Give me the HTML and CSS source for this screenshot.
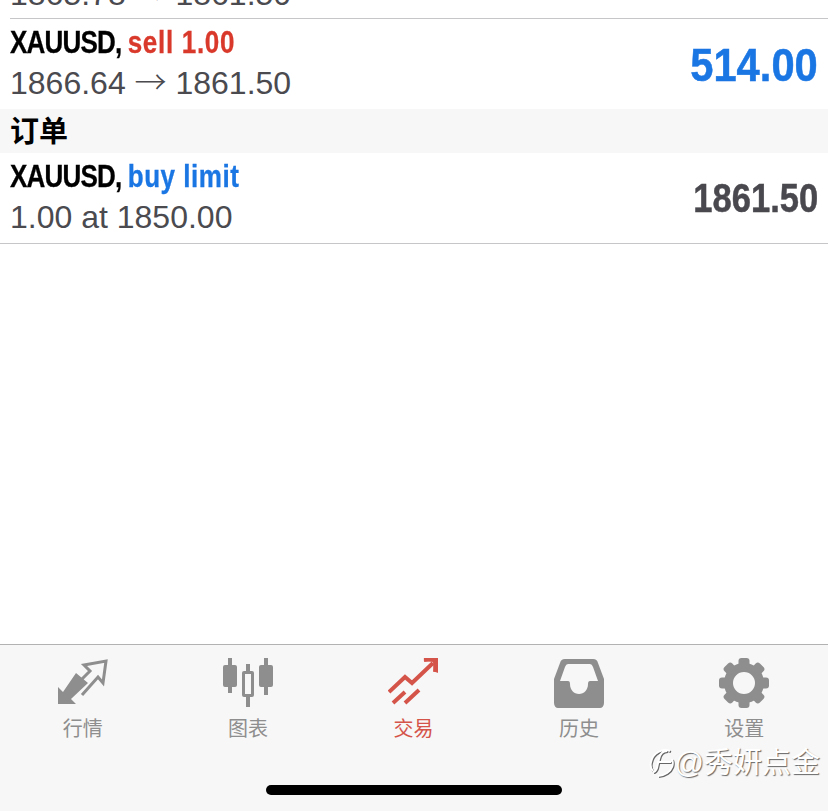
FILE: index.html
```html
<!DOCTYPE html>
<html lang="zh">
  <head>
    <meta charset="utf-8" />
    <meta name="viewport" content="width=device-width,initial-scale=1" />
    <title>交易</title>
    <link rel="stylesheet" href="styles.css">
  </head>
  <body>
    <main class="list">
      <div class="cut-row">
        <div class="cut-text">1865.78 <span class="arrow">→</span> 1861.50</div>
      </div>
      <section class="trade trade-first">
        <div class="trade-info">
          <div class="trade-title"><span class="symbol">XAUUSD, </span><span class="sell">sell 1.00</span></div>
          <div class="trade-sub">1866.64 <span class="arrow">→</span> 1861.50</div>
        </div>
        <div class="profit">514.00</div>
      </section>
      <h2 class="group-head">订单</h2>
      <section class="trade trade-last">
        <div class="trade-info">
          <div class="trade-title"><span class="symbol">XAUUSD, </span><span class="buy">buy limit</span></div>
          <div class="trade-sub">1.00 at 1850.00</div>
        </div>
        <div class="price">1861.50</div>
      </section>
    </main>

    <footer class="tabbar">
      <nav class="tabs">
        <a class="tab">
          <svg class="tab-icon" viewBox="0 0 50 50">
            <path d="M0 46V29l5 5L18 15l12 10-17 16 5 5z" fill="currentColor"/>
            <path d="M22 23l10-10-6-6 22-4-3 22-5-6-16 18" fill="none" stroke="currentColor" stroke-width="3"/>
          </svg>
          <span class="tab-label">行情</span>
        </a>
        <a class="tab">
          <svg class="tab-icon" viewBox="0 0 50 50">
            <path d="M5 0h4v7h3a2 2 0 0 1 2 2v18a2 2 0 0 1-2 2H9v6H5v-6H2a2 2 0 0 1-2-2V9a2 2 0 0 1 2-2h3zM41 0h4v7h3a2 2 0 0 1 2 2v18a2 2 0 0 1-2 2h-3v8h-4v-8h-3a2 2 0 0 1-2-2V9a2 2 0 0 1 2-2h3z" fill="currentColor"/>
            <path d="M23 6h4v7h2a2 2 0 0 1 2 2v22a2 2 0 0 1-2 2h-2v10h-4V39h-2a2 2 0 0 1-2-2V15a2 2 0 0 1 2-2h2zm-1 10v20h6V16z" fill="currentColor" fill-rule="evenodd"/>
          </svg>
          <span class="tab-label">图表</span>
        </a>
        <a class="tab tab-active">
          <svg class="tab-icon" viewBox="0 0 50 50">
            <path d="M1 34l16-15 7 6L45 5" fill="none" stroke="currentColor" stroke-width="4"/>
            <path d="M35 2l15-2v15l-4-2-1-9z" fill="currentColor"/>
            <path d="M36 2l12-1-1 13" fill="none" stroke="currentColor" stroke-width="4"/>
            <path d="M5 45l12-11M17 45l14-13" fill="none" stroke="currentColor" stroke-width="4"/>
          </svg>
          <span class="tab-label">交易</span>
        </a>
        <a class="tab">
          <svg class="tab-icon" viewBox="0 0 50 50">
            <path fill-rule="evenodd" fill="currentColor" d="M11 1H39C42 1 43 2 44 5L50 21V45C50 48 48 50 46 50H4C2 50 0 48 0 45V21L6 5C7 2 8 1 11 1ZM6 23L11 9Q12 6 14 6H36Q38 6 39 9L44 23H36Q34 23 34 26C34 32 30 36 25 36C20 36 16 32 16 26Q16 23 14 23Z"/>
          </svg>
          <span class="tab-label">历史</span>
        </a>
        <a class="tab">
          <svg class="tab-icon" viewBox="0 0 50 50">
            <g fill="currentColor">
              <circle cx="25" cy="25" r="15.5" fill="none" stroke="currentColor" stroke-width="9"/>
              <rect x="19.5" y="0" width="11" height="10" rx="3"/>
              <rect x="19.5" y="0" width="11" height="10" rx="3" transform="rotate(45 25 25)"/>
              <rect x="19.5" y="0" width="11" height="10" rx="3" transform="rotate(90 25 25)"/>
              <rect x="19.5" y="0" width="11" height="10" rx="3" transform="rotate(135 25 25)"/>
              <rect x="19.5" y="0" width="11" height="10" rx="3" transform="rotate(180 25 25)"/>
              <rect x="19.5" y="0" width="11" height="10" rx="3" transform="rotate(225 25 25)"/>
              <rect x="19.5" y="0" width="11" height="10" rx="3" transform="rotate(270 25 25)"/>
              <rect x="19.5" y="0" width="11" height="10" rx="3" transform="rotate(315 25 25)"/>
            </g>
          </svg>
          <span class="tab-label">设置</span>
        </a>
      </nav>
      <div class="home-bar"></div>
      <div class="watermark">
        <svg class="mark-icon" viewBox="0 0 26 30">
          <path d="M21 3C13 0 4 5 2 14c-1 4 0 7 2 9M23 11c2 5 0 11-5 14-3 2-7 3-9 3M18 3c-5 0-7 3-8 8l-2 9c-1 3-2 4-4 4M8 14h14" fill="none" stroke="#fff" stroke-width="2"/>
        </svg>
        <span>@秀妍点金</span>
      </div>
    </footer>
  </body>
</html>
```

FILE: styles.css
```css
html,
body {
  height: 100%;
}

body {
  display: flex;
  flex-direction: column;
  height: 811px;
  margin: 0;
  overflow: hidden;
  background-color: #fff;
  font-family: "Liberation Sans", "Noto Sans CJK SC", sans-serif;
}

*,
:after,
:before {
  box-sizing: border-box;
}

.list {
  flex: 1;
}

.cut-row {
  display: flex;
  align-items: flex-end;
  height: 19px;
  margin-left: 10px;
  overflow: hidden;
  border-bottom: 1px solid #c6c6c8;
}

.cut-text {
  margin-bottom: 6px;
  color: #4a4a4f;
  font-size: 32px;
  line-height: 36px;
  white-space: nowrap;
}

.arrow {
  font-family: "Noto Sans CJK SC", sans-serif;
  font-weight: 300;
  line-height: 0;
}

.trade {
  display: flex;
  align-items: center;
  justify-content: space-between;
  padding: 0 10px;
}

.trade-first {
  height: 90px;
}

.trade-last {
  height: 91px;
  border-bottom: 1px solid #c6c6c8;
}

.trade-info {
  margin-bottom: 3px;
}

.trade-title {
  color: #000;
  font-size: 31px;
  font-weight: bold;
  line-height: 36px;
  white-space: nowrap;
  transform: scaleX(0.84);
  transform-origin: left center;
  -webkit-text-stroke: 0.3px currentColor;
}

.symbol {
  letter-spacing: -1px;
}

.sell {
  color: #d9392b;
  letter-spacing: 0.8px;
}

.buy {
  color: #1a76e3;
  letter-spacing: 0.6px;
}

.trade-sub {
  height: 36px;
  margin-top: 4px;
  color: #4a4a4f;
  font-size: 32px;
  line-height: 36px;
  white-space: nowrap;
}

.profit {
  color: #1a76e3;
  font-size: 47px;
  font-weight: bold;
  transform: scaleX(0.887);
  transform-origin: right center;
  -webkit-text-stroke: 0.5px currentColor;
}

.price {
  color: #48484e;
  font-size: 41px;
  font-weight: bold;
  transform: scaleX(0.843);
  transform-origin: right center;
  -webkit-text-stroke: 0.5px currentColor;
}

.group-head {
  height: 44px;
  margin: 0;
  padding: 0 10px;
  overflow: hidden;
  background-color: #f7f7f7;
  color: #000;
  font-size: 29px;
  font-weight: 700;
  line-height: 46px;
}

.tabbar {
  position: relative;
  flex: none;
  height: 167px;
  border-top: 1px solid #b2b2b2;
  background-color: #f7f7f7;
}

.tabs {
  display: grid;
  grid-template-columns: repeat(5, 1fr);
  padding: 13px 1px 0 0;
}

.tab {
  display: flex;
  flex-direction: column;
  align-items: center;
  color: #8e8e8e;
}

.tab-active {
  color: #d5544a;
}

.tab-icon {
  display: block;
  width: 50px;
  height: 50px;
}

.tab-label {
  margin-top: 9px;
  font-size: 20px;
  line-height: 24px;
}

.home-bar {
  position: absolute;
  left: 266px;
  bottom: 16px;
  width: 296px;
  height: 10px;
  border-radius: 5px;
  background-color: #000;
}

.watermark {
  position: absolute;
  right: 8px;
  bottom: 31px;
  display: flex;
  align-items: center;
  color: #fff;
  font-size: 29px;
  line-height: 34px;
  text-shadow: 1px 1px 1px #666;
}

.mark-icon {
  width: 26px;
  height: 30px;
  filter: drop-shadow(1px 1px 0 #666);
}
```
